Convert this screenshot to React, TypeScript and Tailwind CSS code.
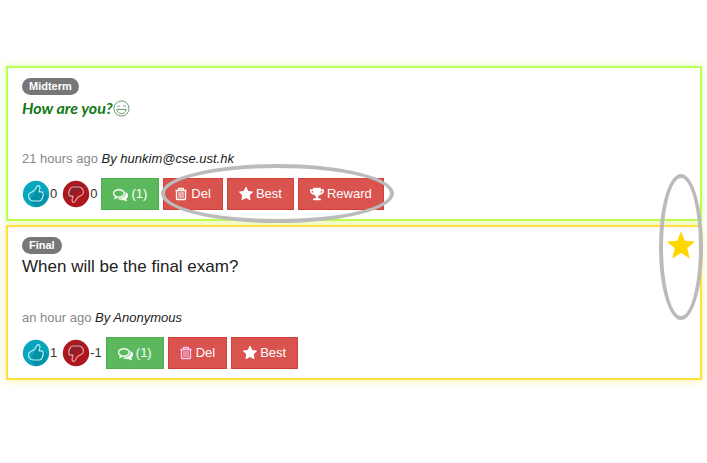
import type { ReactNode } from "react";
import { FaTrophy } from "react-icons/fa";

function Thumb({ down = false }: { down?: boolean }) {
  return (
    <svg viewBox="0 0 28 28" className="size-7" aria-hidden="true">
      <circle cx="14" cy="14" r="13.2" fill={down ? "#ad171e" : "#08a6bd"} />
      <path d={down ? "M6 20 A12.5 12.5 0 0 1 22 5 L14 14Z" : "M16 7 L26 16 A13 13 0 0 1 14 27 L8 21Z"} fill={down ? "#8c2028" : "#078fa6"} />
      <g transform={down ? "rotate(180 14 14)" : undefined}>
        <path
          d="M6.500 16 Q6.500 13.500 8.500 12.800 L12.500 10.500 L15 6.500 Q16 5 17.300 6 Q18.500 7 17.600 10 L17 11.800 H19.500 Q21.500 12.200 21 14 Q22 15.500 20.700 16.700 Q21 18.300 19.700 19 Q19.500 21 17.500 21 H11.500 L9 20.500 Q6.500 19 6.500 16Z"
          fill="none"
          stroke={down ? "#e3a5a8" : "#b5f0f5"}
          strokeWidth="1.2"
          strokeLinejoin="round"
        />
      </g>
    </svg>
  );
}

function Comments() {
  return (
    <svg viewBox="0 0 1792 1792" className="size-[15px]" fill="currentColor" stroke="currentColor" strokeWidth="50" aria-hidden="true">
      <path d="M704 384q-153 0-286 52t-211.5 141-78.5 191q0 82 53 158t149 132l97 56-35 84q34-20 62-39l44-31 53 10q78 14 153 14 153 0 286-52t211.5-141 78.5-191-78.5-191-211.5-141-286-52zm0-128q191 0 353.5 68.5t256.5 186.5 94 257-94 257-256.5 186.5-353.5 68.5q-86 0-176-16-124 88-278 128-36 9-86 16h-3q-11 0-20.5-8t-11.5-21q-1-3-1-6.5t.5-6.5 2-6l2.5-5 3.5-5.5 4-5 4.5-5 4-4.5q5-6 23-25t26-29.5 22.5-29 25-38.5 20.5-44q-124-72-195-177t-71-224q0-139 94-257t256.5-186.5 353.5-68.5zm822 1169q10 24 20.5 44t25 38.5 22.5 29 26 29.5 23 25q1 1 4 4.5t4.5 5 4 5 3.5 5.5l2.5 5 2 6 .5 6.5-1 6.5q-3 14-13 22t-22 7q-50-7-86-16-154-40-278-128-90 16-176 16-271 0-472-132 58 4 88 4 161 0 309-45t264-129q125-92 192-212t67-254q0-77-23-152 129 71 204 178t75 230q0 120-71 224.5t-195 176.5z" />
    </svg>
  );
}

function Trash({ tint }: { tint: string }) {
  return (
    <svg viewBox="0 0 13 14" className={`h-3.5 w-[13px] ${tint}`} fill="none" stroke="currentColor" aria-hidden="true">
      <path d="M0.5 3.5H11.5M3.5 3V2Q3.5 1.5 4 1.5H8Q8.500 1.500 8.500 2V3M1.500 4V12Q1.500 12.500 2 12.500H10Q10.500 12.500 10.500 12V4" strokeWidth="1.3" />
      <path d="M4 5V11M6 5V11M8 5V11" />
    </svg>
  );
}

function Star() {
  return (
    <svg viewBox="64 64 1664 1664" className="size-3.5" fill="currentColor" aria-hidden="true">
      <path d="M1728 647q0 22-26 48l-363 354 86 500q1 7 1 20 0 21-10.500 35.500t-30.500 14.500q-19 0-40-12l-449-236-449 236q-22 12-40 12-21 0-31.500-14.500t-10.500-35.500q0-6 2-20l86-500-364-354q-25-27-25-48 0-37 56-46l502-73 225-455q19-41 49-41t49 41l225 455 502 73q56 9 56 46z" />
    </svg>
  );
}

function GoldStar() {
  return (
    <svg viewBox="0 0 28 28" className="size-7" fill="currentColor" role="img" aria-label="Starred">
      <path d="M14 0.500L17.800 9.800L28 10.500L20.300 17.200L22.700 27.500L14 22L5.300 27.500L7.700 17.200L0 10.500L10.200 9.800Z" />
    </svg>
  );
}

function Smile() {
  return (
    <svg viewBox="0 0 18 18" className="size-[17px]" fill="none" stroke="#5d9262" aria-hidden="true">
      <circle cx="9" cy="9" r="8" />
      <path d="M4.500 7Q5.500 5.200 7 6.700M11 6.700Q12.500 5.200 13.500 7M4 10H14Q13 14.500 9 14.500T4 10Z" />
    </svg>
  );
}

function ActionButton({ color, icon, children }: { color: string; icon: ReactNode; children: ReactNode }) {
  return (
    <button type="button" className={`flex h-8 items-center gap-[3px] border px-[11px] text-[13px] text-white ${color}`}>
      {icon}
      {children}
    </button>
  );
}

const red = "border-[#d43f3a] bg-[#d9534f]";
const green = "border-[#4cae4c] bg-[#5cb85c]";

type QuestionProps = {
  tag: string;
  title: ReactNode;
  time: string;
  author: string;
  up: number;
  down: number;
  frame: string;
  trashTint: string;
  reward?: boolean;
  starred?: boolean;
};

function Question({ tag, title, time, author, up, down, frame, trashTint, reward, starred }: QuestionProps) {
  return (
    <article className={`flex items-start justify-between border-2 pt-[9px] pr-[5px] pb-[9px] pl-3.5 ${frame}`}>
      <div>
        <div className="flex h-[18px] items-center">
          <span className="rounded-full bg-[#777] px-[7px] text-[11px] leading-[17px] font-bold text-white">{tag}</span>
        </div>
        <h2 className="flex h-[26px] items-center">{title}</h2>
        <p className="mt-7 text-[13px] leading-5 text-[#888]">
          {time} <em className="text-[#222]">By {author}</em>
        </p>
        <div className="mt-[9px] flex items-center gap-1 text-[13px] text-[#333]">
          <button type="button" aria-label="Vote up"><Thumb /></button>
          <span className="-ml-1 pr-px">{up}</span>
          <button type="button" aria-label="Vote down"><Thumb down /></button>
          <span className="-ml-1">{down}</span>
          <ActionButton color={green} icon={<Comments />}>(1)</ActionButton>
          <ActionButton color={red} icon={<Trash tint={trashTint} />}>Del</ActionButton>
          <div className="relative flex gap-1">
            <ActionButton color={red} icon={<Star />}>Best</ActionButton>
            {reward && <ActionButton color={red} icon={<FaTrophy className="size-3.5" />}>Reward</ActionButton>}
            {reward && (
              <span className="pointer-events-none absolute -top-3.5 -right-2.5 -left-[66px] h-[59px] rounded-[50%] border-4 border-[#bbb]" />
            )}
          </div>
        </div>
      </div>
      {starred && (
        <div className="relative -mt-[5px] text-[#ffd700]">
          <GoldStar />
          <span className="pointer-events-none absolute -top-[57px] -left-2 h-[146px] w-11 rounded-[50%] border-4 border-[#bbb]" />
        </div>
      )}
    </article>
  );
}

export default function App() {
  return (
    <main className="flex min-h-screen flex-col gap-1 bg-white pt-[66px] pr-[5px] pl-1.5 font-['Liberation_Sans',Arial,sans-serif]">
      <Question
        tag="Midterm"
        title={
          <>
            <span className="font-['Lato',cursive] text-base font-bold text-[#137a13] italic">How are you?</span>
            <Smile />
          </>
        }
        time="21 hours ago"
        author="hunkim@cse.ust.hk"
        up={0}
        down={0}
        frame="border-[#b9ff55] shadow-[0_0_8px_#adff2f66]"
        trashTint="text-white"
        reward
      />
      <Question
        tag="Final"
        title={<span className="text-[17px] text-[#222]">When will be the final exam?</span>}
        time="an hour ago"
        author="Anonymous"
        up={1}
        down={-1}
        frame="border-[#ffe040] shadow-[0_0_8px_#ffd70066]"
        trashTint="text-[#ffc8f6]"
        starred
      />
    </main>
  );
}
